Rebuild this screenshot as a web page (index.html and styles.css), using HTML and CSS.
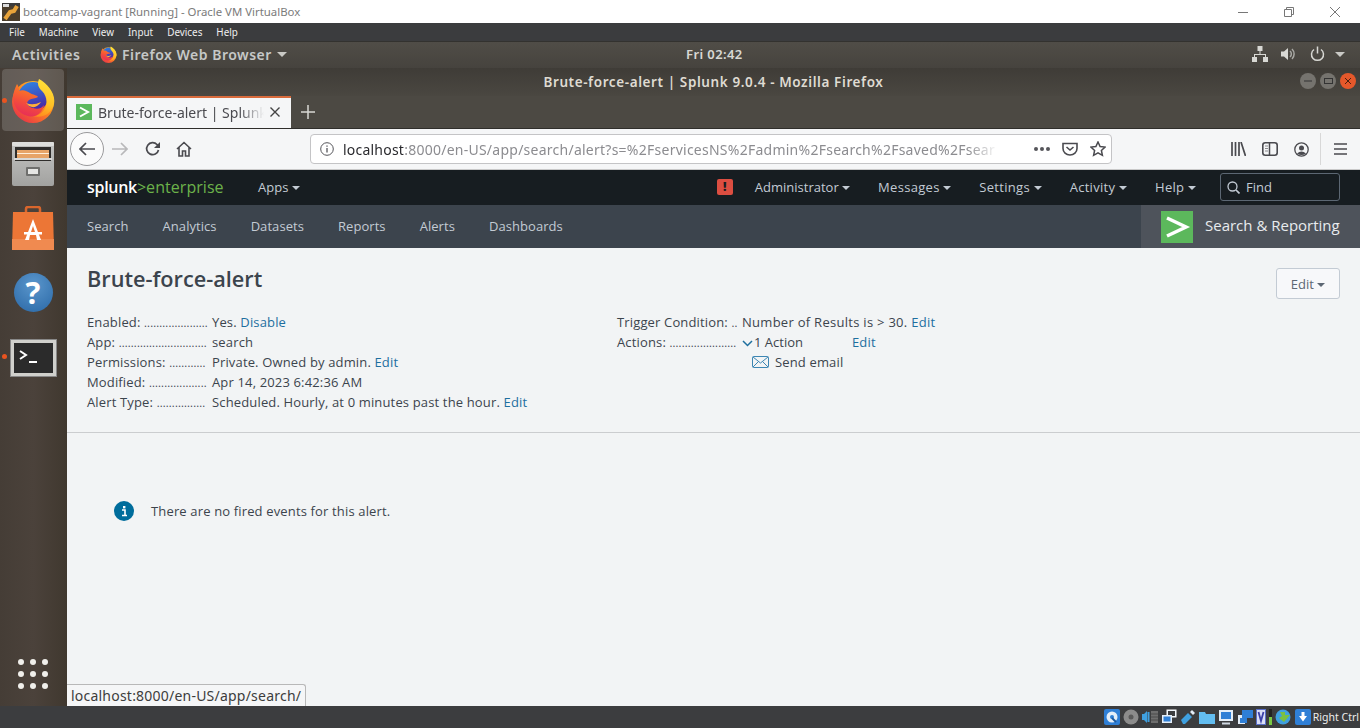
FILE: index.html
```html
<!DOCTYPE html>
<html lang="en">
<head>
    <meta charset="UTF-8">
    <title>Brute-force-alert | Splunk 9.0.4</title>
    <link rel="stylesheet" href="styles.css">
</head>
<body>
    <div class="vm-title">
        <svg class="vm-logo" width="18" height="18" viewBox="0 0 18 18"><rect width="18" height="18" fill="#3b3a3a"/><rect y="3" width="18" height="15" fill="#4a3d2c"/><path d="M3 16 L8 9 L12 8 L15 3" stroke="#e8a33a" stroke-width="4" fill="none"/><rect x="1" y="1" width="6" height="3" fill="#ddd"/></svg>
        <span class="vm-title-text">bootcamp-vagrant [Running] - Oracle VM VirtualBox</span>
        <div class="vm-controls">
            <svg width="12" height="12" viewBox="0 0 12 12"><path d="M1 6.500H11" stroke="#777"/></svg>
            <svg width="12" height="12" viewBox="0 0 12 12"><path d="M1.500 3.500H8.500V10.500H1.500ZM3.500 3.500V1.500H10.500V8.500H8.500" stroke="#777" fill="none"/></svg>
            <svg width="12" height="12" viewBox="0 0 12 12"><path d="M1 1L11 11M11 1L1 11" stroke="#777"/></svg>
        </div>
    </div>
    <div class="vm-menu">
        <span>File</span><span>Machine</span><span>View</span><span>Input</span><span>Devices</span><span>Help</span>
    </div>

    <div class="topbar">
        <span class="activities">Activities</span>
        <span class="app-menu">
            <svg width="17" height="17" viewBox="0 0 44 45"><use href="#firefox"/></svg>
            Firefox Web Browser <i class="caret caret-grey"></i>
        </span>
        <span class="clock">Fri 02:42</span>
        <div class="tray">
            <svg width="16" height="16" viewBox="0 0 16 16" fill="#d8d8d4"><rect x="5.500" y="0" width="5" height="5"/><rect x="0" y="11" width="5" height="5"/><rect x="11" y="11" width="5" height="5"/><path d="M7.500 5h1v3h5.500v3h-1V9H3v2H2V8h5.500z"/></svg>
            <svg width="16" height="16" viewBox="0 0 16 16"><path d="M0 5.500h3L7 2v12L3 10.500H0z" fill="#d8d8d4"/><path d="M9 5a4 4 0 0 1 0 6M11 3a7 7 0 0 1 0 10" stroke="#a8a8a4" stroke-width="1.500" fill="none"/></svg>
            <svg class="power" width="15" height="16" viewBox="0 0 15 16"><path d="M4 3.500a6 6 0 1 0 7 0M7.500 0.500v7" stroke="#d8d8d4" stroke-width="1.500" fill="none"/></svg>
            <i class="caret caret-grey tray-caret"></i>
        </div>
    </div>

    <div class="desktop">
        <aside class="dock">
            <div class="dock-item active">
                <i class="run-dot"></i>
                <svg width="44" height="45" viewBox="0 0 44 45"><use href="#firefox"/></svg>
            </div>
            <div class="dock-item">
                <svg width="42" height="44" viewBox="0 0 42 44">
                    <defs><linearGradient id="cabinet" x1="0" y1="0" x2="0" y2="1"><stop offset="0" stop-color="#c4c4c2"/><stop offset="1" stop-color="#a2a2a0"/></linearGradient></defs>
                    <rect width="42" height="44" rx="2" fill="url(#cabinet)"/><rect width="42" height="4" rx="1" fill="#dededc"/><rect x="3" y="5" width="36" height="14" fill="#2f2d2b"/><rect x="5" y="8" width="32" height="8" fill="#e7a468"/><rect x="5" y="11" width="32" height="1" fill="#fff0dc"/><rect x="2" y="16" width="38" height="2" fill="#d9d9d7"/><rect x="14" y="25" width="14" height="9" rx="1" fill="#6f6f6d"/><rect x="16" y="27" width="10" height="5" fill="#e6e6e4"/>
                </svg>
            </div>
            <div class="dock-item">
                <svg width="42" height="44" viewBox="0 0 42 44"><path d="M14 9V3q0-2 2-2h10q2 0 2 2v6" stroke="#d9662c" stroke-width="2.500" fill="none"/><path d="M1 6h40l1 38H0z" fill="#ec7636"/><rect y="33" width="42" height="11" fill="#f08a50"/><path d="M21 13l8 21h-4l-1-5h-6l-1 5h-4zM21 20l-2 6h4z" fill="#fff"/><rect x="12" y="26" width="18" height="2.500" fill="#fff"/></svg>
            </div>
            <div class="dock-item">
                <div class="help-ball">?</div>
            </div>
            <div class="dock-item">
                <i class="run-dot"></i>
                <div class="terminal">
                    <svg width="20" height="14" viewBox="0 0 20 14"><path d="M1 1l6 4-6 4" stroke="#fff" stroke-width="2" fill="none"/><path d="M10 12h8" stroke="#fff" stroke-width="2"/></svg>
                </div>
            </div>
            <div class="app-grid">
                <i></i><i></i><i></i><i></i><i></i><i></i><i></i><i></i><i></i>
            </div>
        </aside>

        <div class="window">
            <div class="win-title">
                <span>Brute-force-alert | Splunk 9.0.4 - Mozilla Firefox</span>
                <div class="win-buttons">
                    <i class="win-btn"><svg width="8" height="8" viewBox="0 0 8 8"><path d="M0 4h8" stroke="#333"/></svg></i>
                    <i class="win-btn"><svg width="9" height="8" viewBox="0 0 9 8"><rect x=".5" y="1.500" width="8" height="5" stroke="#333" fill="none"/></svg></i>
                    <i class="win-btn close"><svg width="8" height="8" viewBox="0 0 8 8"><path d="M1 1l6 6M7 1l-6 6" stroke="#4a2010"/></svg></i>
                </div>
            </div>
            <div class="tabstrip">
                <div class="tab">
                    <svg class="favicon" width="16" height="16" viewBox="0 0 16 16"><rect width="16" height="16" fill="#5cb85c"/><path d="M4 3.500l8 4.500-8 4.500" stroke="#fff" stroke-width="2" fill="none"/></svg>
                    <span class="tab-label">Brute-force-alert | Splunk</span>
                    <svg width="10" height="10" viewBox="0 0 10 10"><path d="M.5 .5l9 9M9.500 .5l-9 9" stroke="#444" stroke-width="1.400"/></svg>
                </div>
                <svg class="new-tab" width="14" height="14" viewBox="0 0 14 14"><path d="M7 0v14M0 7h14" stroke="#d8d8d4" stroke-width="1.500"/></svg>
            </div>
            <div class="toolbar">
                <div class="back-btn">
                    <svg width="16" height="14" viewBox="0 0 16 14"><path d="M7 1L1 7l6 6M1 7h15" stroke="#4a4a4f" stroke-width="1.700" fill="none"/></svg>
                </div>
                <svg class="tool-icon" width="16" height="14" viewBox="0 0 16 14"><path d="M9 1l6 6-6 6M15 7H0" stroke="#b8b8ba" stroke-width="1.700" fill="none"/></svg>
                <svg class="tool-icon reload" width="16" height="16" viewBox="0 0 16 16"><path d="M13.500 9a6 6 0 1 1-1.500-5.500L14 6" stroke="#4a4a4f" stroke-width="1.700" fill="none"/><path d="M15 1v6H9z" fill="#4a4a4f"/></svg>
                <svg class="tool-icon home" width="16" height="16" viewBox="0 0 16 16"><path d="M1 8l7-6.500L15 8M3 6.500V15h3.500v-5h3v5H13V6.500" stroke="#4a4a4f" stroke-width="1.600" fill="none"/></svg>
                <div class="urlbar">
                    <svg width="14" height="14" viewBox="0 0 14 14"><circle cx="7" cy="7" r="6.300" stroke="#55555a" fill="none"/><path d="M7 6v4.500M7 3.500v1.300" stroke="#55555a" stroke-width="1.300"/></svg>
                    <span class="url"><b>localhost</b>:8000/en-US/app/search/alert?s=%2FservicesNS%2Fadmin%2Fsearch%2Fsaved%2Fsear</span>
                    <span class="url-dots"><i></i><i></i><i></i></span>
                    <svg width="16" height="14" viewBox="0 0 16 14"><path d="M1 1.500h14v5a7 6.500 0 0 1-14 0z" stroke="#4a4a4f" stroke-width="1.600" fill="none"/><path d="M4.500 5l3.500 3 3.500-3" stroke="#4a4a4f" stroke-width="1.600" fill="none"/></svg>
                    <svg width="16" height="16" viewBox="0 0 16 16"><path d="M8 1l2.100 4.600 5 .5-3.700 3.300 1 4.900L8 11.900l-4.400 2.400 1-4.900L.9 6.100l5-.5z" stroke="#4a4a4f" stroke-width="1.500" fill="none"/></svg>
                </div>
                <div class="tool-right">
                    <svg width="15" height="14" viewBox="0 0 15 14"><path d="M1 0v14M4.500 0v14M8 0v14M10 0l4.500 14" stroke="#4a4a4f" stroke-width="1.700" fill="none"/></svg>
                    <svg width="16" height="14" viewBox="0 0 16 14"><rect x=".8" y=".8" width="14.400" height="12.400" rx="2.500" stroke="#4a4a4f" stroke-width="1.600" fill="none"/><path d="M7.500 1v12" stroke="#4a4a4f" stroke-width="1.500"/><path d="M3 4h3M3 6.500h3M3 9h3" stroke="#8a8a8e"/></svg>
                    <svg width="15" height="15" viewBox="0 0 15 15"><circle cx="7.500" cy="7.500" r="6.700" stroke="#4a4a4f" stroke-width="1.300" fill="none"/><circle cx="7.500" cy="6" r="2.500" fill="#4a4a4f"/><path d="M3 11.500q4.500-4 9 0q-4.500 3-9 0z" fill="#4a4a4f"/></svg>
                    <i class="tool-sep"></i>
                    <svg width="13" height="12" viewBox="0 0 13 12"><path d="M0 1h13M0 6h13M0 11h13" stroke="#4a4a4f" stroke-width="1.700"/></svg>
                </div>
            </div>

            <div class="splunk">
                <header class="splunk-bar">
                    <span class="splunk-logo">splunk<em>&gt;enterprise</em></span>
                    <span class="bar-link apps">Apps <i class="caret"></i></span>
                    <div class="bar-right">
                        <span class="alert-badge">!</span>
                        <span class="bar-link user-link">Administrator <i class="caret"></i></span>
                        <span class="bar-link">Messages <i class="caret"></i></span>
                        <span class="bar-link">Settings <i class="caret"></i></span>
                        <span class="bar-link">Activity <i class="caret"></i></span>
                        <span class="bar-link">Help <i class="caret"></i></span>
                        <div class="find">
                            <svg width="13" height="13" viewBox="0 0 13 13"><circle cx="5.500" cy="5.500" r="4.500" stroke="#c3cbd4" stroke-width="1.300" fill="none"/><path d="M9 9l3.500 3.500" stroke="#c3cbd4" stroke-width="1.700"/></svg>
                            Find
                        </div>
                    </div>
                </header>
                <nav class="app-nav">
                    <a>Search</a><a>Analytics</a><a>Datasets</a><a>Reports</a><a>Alerts</a><a>Dashboards</a>
                    <div class="app-name">
                        <svg width="32" height="32" viewBox="0 0 32 32"><rect width="32" height="32" fill="#5cb85c"/><path d="M6 7l19 9-19 9" stroke="#fff" stroke-width="3.500" fill="none"/></svg>
                        <span>Search &amp; Reporting</span>
                    </div>
                </nav>

                <main class="content">
                    <section class="alert-head">
                        <div class="head-row">
                            <h1>Brute-force-alert</h1>
                            <button class="edit-btn">Edit <i class="caret caret-dark"></i></button>
                        </div>
                        <div class="details">
                            <div class="detail-col col-left">
                                <div class="row"><span class="key">Enabled: <span class="dots">.....................</span></span><span>Yes. <a>Disable</a></span></div>
                                <div class="row"><span class="key">App: <span class="dots">.............................</span></span><span>search</span></div>
                                <div class="row"><span class="key">Permissions: <span class="dots">............</span></span><span>Private. Owned by admin. <a>Edit</a></span></div>
                                <div class="row"><span class="key">Modified: <span class="dots">...................</span></span><span>Apr 14, 2023 6:42:36 AM</span></div>
                                <div class="row"><span class="key">Alert Type: <span class="dots">................</span></span><span>Scheduled. Hourly, at 0 minutes past the hour. <a>Edit</a></span></div>
                            </div>
                            <div class="detail-col">
                                <div class="row"><span class="key">Trigger Condition: <span class="dots">..</span></span><span class="trigger-value">Number of Results is &gt; 30. <a>Edit</a></span></div>
                                <div class="row"><span class="key">Actions: <span class="dots">......................</span></span><span class="action-count"><svg width="11" height="7" viewBox="0 0 11 7"><path d="M1 1l4.500 4.500L10 1" stroke="#1e6f9f" stroke-width="1.500" fill="none"/></svg>1 Action</span><a>Edit</a></div>
                                <div class="row row-email">
                                    <svg width="17" height="12" viewBox="0 0 17 12"><rect x=".5" y=".5" width="16" height="11" rx="1" stroke="#3d86b3" fill="none"/><path d="M1 1l7.500 6L16 1M1 11l5.500-5.500M16 11l-5.500-5.500" stroke="#3d86b3" fill="none"/></svg>
                                    <span>Send email</span>
                                </div>
                            </div>
                        </div>
                    </section>
                    <div class="no-events">
                        <svg width="20" height="20" viewBox="0 0 20 20"><circle cx="10" cy="10" r="10" fill="#006d9c"/><path d="M8 9h3v5.500M8 14.500h5" stroke="#fff" stroke-width="1.600" fill="none"/><rect x="9" y="5" width="2.400" height="2.400" fill="#fff"/></svg>
                        <span>There are no fired events for this alert.</span>
                    </div>
                </main>
            </div>
            <div class="status-tip">localhost:8000/en-US/app/search/</div>
        </div>
    </div>

    <footer class="vm-status">
        <svg viewBox="0 0 16 16"><rect width="16" height="16" rx="2" fill="#2f7fd6"/><circle cx="8" cy="8" r="5.500" fill="#e4eef8"/><circle cx="8" cy="8" r="2" fill="#2f7fd6"/><path d="M8 9l4 4" stroke="#1c5a9e" stroke-width="2"/></svg>
        <svg viewBox="0 0 16 16"><circle cx="8" cy="8" r="7.500" fill="#8c8c8c"/><circle cx="8" cy="8" r="2.500" fill="#5a5a5a"/></svg>
        <svg viewBox="0 0 16 16"><path d="M0 5h2l3-3v12l-3-3H0z" fill="#3fa0e0"/><path d="M6.500 3v10" stroke="#3fa0e0" stroke-width="2"/><rect x="9" y="2" width="7" height="12" fill="#6e6e6e"/><path d="M9 5h7M9 8h7M9 11h7" stroke="#4a4a4a"/></svg>
        <svg viewBox="0 0 16 16"><rect x="6" y="1" width="9" height="7" fill="#e4eef8" stroke="#fff"/><rect x="7" y="2" width="7" height="5" fill="#3c3d3f"/><rect x="1" y="6" width="10" height="8" fill="#e4eef8"/><rect x="2.500" y="7.500" width="7" height="5" fill="#2f7fd6"/></svg>
        <svg viewBox="0 0 16 16"><path d="M1 11l7-7 4 4-7 7H3z" fill="#3fa0e0"/><path d="M10 3l2-2 3 3-2 2z" fill="#e4eef8"/></svg>
        <svg viewBox="0 0 16 16"><path d="M0 3h6l1 2h9v10H0z" fill="#63bdf0"/></svg>
        <svg viewBox="0 0 16 16"><rect x="1" y="1" width="14" height="11" fill="#e4eef8"/><rect x="3" y="3" width="10" height="7" fill="#2f7fd6"/><path d="M4 14.500h8" stroke="#cfd8e2" stroke-width="2"/></svg>
        <svg viewBox="0 0 16 16"><path d="M1 6h7v9H1z" fill="#e4eef8"/><rect x="5" y="1" width="11" height="8" fill="#2f7fd6"/><rect x="3" y="9" width="7" height="5" fill="#2f7fd6"/></svg>
        <svg class="vm-v" viewBox="0 0 10 16"><rect width="10" height="16" fill="#5a6fc8"/><rect x="1" y="1" width="8" height="14" fill="#d9def5"/><path d="M2.500 3l2.500 9 2.500-9" stroke="#3a3fa8" stroke-width="1.800" fill="none"/></svg>
        <i class="vm-meter"></i>
        <svg class="vm-net" viewBox="0 0 17 16"><circle cx="8" cy="8" r="7.500" fill="#3fa0e0"/><path d="M5 3h5v3h5l-6 7-5-4 3-2z" fill="#7ac043"/></svg>
        <svg viewBox="0 0 16 16"><rect width="16" height="16" rx="2" fill="#2f7fd6"/><path d="M6.500 3h3v4H12l-4 5.500L4 7h2.500z" fill="#fff"/></svg>
        <span>Right Ctrl</span>
    </footer>

    <svg class="sprites" width="0" height="0">
        <defs>
            <linearGradient id="ffBase" x1="1" y1="0" x2="0.2" y2="1">
                <stop offset="0" stop-color="#ffd52e"/>
                <stop offset=".5" stop-color="#ff8a1e"/>
                <stop offset="1" stop-color="#e8304a"/>
            </linearGradient>
            <linearGradient id="ffBlue" x1="0" y1="0" x2="0.3" y2="1">
                <stop offset="0" stop-color="#2a8ae8"/>
                <stop offset="1" stop-color="#4b2aa5"/>
            </linearGradient>
            <linearGradient id="ffFlame" x1="0.5" y1="0" x2="0.3" y2="1">
                <stop offset="0" stop-color="#ffe23a"/>
                <stop offset=".6" stop-color="#ffc226"/>
                <stop offset="1" stop-color="#ff8a1e"/>
            </linearGradient>
            <linearGradient id="ffFox" x1="0.6" y1="0" x2="0.3" y2="1">
                <stop offset="0" stop-color="#ff8a1e"/>
                <stop offset=".55" stop-color="#f4503a"/>
                <stop offset="1" stop-color="#e62a5a"/>
            </linearGradient>
            <g id="firefox">
                <circle cx="22" cy="24" r="21" fill="url(#ffBase)"/>
                <circle cx="22" cy="19" r="15" fill="url(#ffBlue)"/>
                <path d="M28 1C26 6 27 9 31 13C36 18 37 26 33 32C30 36 26 38 22 38C32 41 41 35 43 26C45 16 37 6 28 1Z" fill="url(#ffFlame)"/>
                <path d="M6 6C8 9 8 11 8 13C12 11 16 13 19 15C22 17 26 17 27 19C24 21 21 20 18 22C14 25 17 29 22 30C27 32 31 30 33 27C31 36 24 40 17 38C8 36 2 28 2 20C2 15 4 10 6 6Z" fill="url(#ffFox)"/>
                <path d="M15 25q7 3 15-1-4 6-9 5-4-1-6-4z" fill="#ffb03a"/>
            </g>
        </defs>
    </svg>
</body>
</html>
```

FILE: styles.css
```css
* {
    margin: 0;
    padding: 0;
    box-sizing: border-box;
}

html, body {
    height: 728px;
    overflow: hidden;
}

body {
    display: flex;
    flex-direction: column;
    font-family: 'Noto Sans', sans-serif;
    background: #3c3d3f;
}

i {
    display: block;
    font-style: normal;
}

.caret {
    display: inline-block;
    width: 0;
    height: 0;
    border-left: 4px solid transparent;
    border-right: 4px solid transparent;
    border-top: 4px solid #c3cbd4;
    vertical-align: 2px;
}

.caret-grey {
    border-left-width: 5px;
    border-right-width: 5px;
    border-top: 5px solid #c9c9c5;
}

.caret-dark {
    border-top-color: #5c6773;
}

/* VirtualBox host window */
.vm-title {
    height: 23px;
    background: #fff;
    display: flex;
    align-items: center;
    padding-left: 2px;
    font-size: 11.400px;
    color: #7b7b7b;
    flex: none;
}

.vm-title-text {
    margin-left: 3px;
}

.vm-controls {
    margin-left: auto;
    display: flex;
    gap: 34px;
    padding-right: 19px;
}

.vm-menu {
    height: 18px;
    flex: none;
    display: flex;
    align-items: center;
    background: #3b3c3e;
    color: #eee;
    font-size: 9.900px;
    padding-left: 9px;
    gap: 14px;
}

.topbar {
    height: 27px;
    flex: none;
    display: flex;
    align-items: center;
    position: relative;
    background: linear-gradient(#504d47, #46433e);
    border-top: 1px solid #33322f;
    color: #d8d8d4;
    font-size: 14px;
    font-weight: 600;
    padding: 0 0 2px 12px;
}

.activities {
    width: 88px;
    letter-spacing: .6px;
    color: #c6c8c8;
}

.app-menu {
    display: flex;
    align-items: center;
    gap: 5px;
    letter-spacing: .5px;
    color: #c6c8c8;
}

.clock {
    position: absolute;
    left: 686px;
    font-size: 13px;
    letter-spacing: .4px;
}

.tray {
    margin-left: auto;
    display: flex;
    align-items: center;
    gap: 13px;
    padding-right: 15px;
}

.tray-caret {
    margin-left: -3px;
}

.desktop {
    flex: 1;
    display: flex;
    min-height: 0;
}

.dock {
    width: 67px;
    flex: none;
    background: linear-gradient(90deg, #453d36, #4b423b 50%, #40382f);
    display: flex;
    flex-direction: column;
    position: relative;
    padding: 1px 0 0 2px;
}

.dock-item {
    width: 62px;
    height: 62px;
    margin-bottom: 2px;
    display: flex;
    align-items: center;
    justify-content: center;
    position: relative;
    border-radius: 4px;
}

.dock-item.active {
    background: rgba(255, 255, 255, .16);
}

.run-dot {
    position: absolute;
    left: 0;
    top: 29px;
    width: 5px;
    height: 5px;
    border-radius: 50%;
    background: #e95420;
}

.help-ball {
    width: 39px;
    height: 39px;
    border-radius: 50%;
    background: radial-gradient(circle at 50% 30%, #5a96cc, #2a68a6);
    color: #fff;
    font-size: 31px;
    font-weight: 700;
    line-height: 39px;
    text-align: center;
}

.terminal {
    width: 45px;
    height: 36px;
    margin-top: 4px;
    background: #2b2b2b;
    border: 3px solid #d0d0cc;
    outline: 1px solid #888;
    padding: 4px 0 0 5px;
}

.app-grid {
    position: absolute;
    left: 18px;
    bottom: 17px;
    display: grid;
    grid-template-columns: repeat(3, 6px);
    gap: 6px;
}

.app-grid i {
    width: 6px;
    height: 6px;
    border-radius: 50%;
    background: #f0efeb;
}

.window {
    flex: 1;
    display: flex;
    flex-direction: column;
    position: relative;
    min-width: 0;
}

.win-title {
    height: 28px;
    flex: none;
    display: flex;
    align-items: center;
    justify-content: center;
    background: linear-gradient(#3f3c37, #4a4741);
    color: #dfdbd2;
    font-size: 13.500px;
    font-weight: 600;
    letter-spacing: .6px;
    position: relative;
}

.win-buttons {
    position: absolute;
    right: 4px;
    top: 5px;
    display: flex;
    gap: 4px;
}

.win-btn {
    width: 16px;
    height: 16px;
    border-radius: 50%;
    background: #75736e;
    display: flex;
    align-items: center;
    justify-content: center;
}

.win-btn.close {
    background: #e5582b;
}

.tabstrip {
    height: 33px;
    flex: none;
    display: flex;
    align-items: center;
    background: #4c4943;
    border-bottom: 1px solid #2f2e2b;
}

.tab {
    width: 224px;
    height: 32px;
    background: #f5f6f7;
    border-top: 2px solid #d96b3c;
    display: flex;
    align-items: center;
    padding: 0 11px 2px 9px;
    color: #4a4a4f;
    font-size: 14px;
}

.favicon {
    flex: none;
    margin-right: 6px;
}

.tab-label {
    flex: 1;
    white-space: nowrap;
    overflow: hidden;
    margin-right: 6px;
    -webkit-mask-image: linear-gradient(90deg, #000 85%, transparent);
    mask-image: linear-gradient(90deg, #000 85%, transparent);
}

.new-tab {
    margin-left: 10px;
}

.toolbar {
    height: 41px;
    flex: none;
    display: flex;
    align-items: center;
    background: #f5f6f7;
    border-bottom: 1px solid #c9c9c9;
    padding-left: 3px;
}

.back-btn {
    width: 34px;
    height: 34px;
    border-radius: 50%;
    border: 1px solid #9a9a9c;
    background: #fbfbfb;
    display: flex;
    align-items: center;
    justify-content: center;
    margin-right: 8px;
}

.reload {
    margin-left: 17px;
}

.home {
    margin-left: 15px;
}

.urlbar {
    width: 802px;
    height: 30px;
    margin-left: 118px;
    background: #fff;
    border: 1px solid #c4c4c6;
    border-radius: 4px;
    display: flex;
    align-items: center;
    padding: 0 5px 0 9px;
    gap: 12px;
    font-size: 14px;
    color: #8c8c90;
}

.url {
    flex: 1;
    min-width: 0;
    margin-left: -3px;
    overflow: hidden;
    white-space: nowrap;
    letter-spacing: .25px;
    -webkit-mask-image: linear-gradient(90deg, #000 92%, transparent 96.500%);
    mask-image: linear-gradient(90deg, #000 92%, transparent 96.500%);
}

.url b {
    font-weight: 400;
    letter-spacing: .22px;
    color: #2a2a2e;
}

.url-dots {
    display: flex;
    gap: 2px;
}

.url-dots i {
    width: 4px;
    height: 4px;
    border-radius: 50%;
    background: #55555a;
}

.tool-right {
    display: flex;
    align-items: center;
    gap: 16px;
    margin-left: 119px;
}

.tool-sep {
    width: 1px;
    height: 32px;
    background: #d8d8d8;
    margin: 0 -3px 0 -5px;
}

/* Splunk page */
.splunk {
    flex: 1;
    display: flex;
    flex-direction: column;
    background: #f2f4f5;
    font-family: 'Open Sans', sans-serif;
    min-height: 0;
}

.splunk-bar {
    height: 35px;
    flex: none;
    display: flex;
    align-items: center;
    background: #171d21;
    padding: 0 0 1px 20px;
    color: #c3cbd4;
    font-size: 13px;
}

.splunk-logo {
    font-size: 16px;
    font-weight: 600;
    color: #fff;
    width: 171px;
    letter-spacing: -.3px;
}

.splunk-logo em {
    font-style: normal;
    font-weight: 400;
    color: #6cb24a;
    letter-spacing: .05px;
}

.bar-right {
    margin-left: auto;
    display: flex;
    align-items: center;
    gap: 28px;
    padding-right: 20px;
}

.bar-right .bar-link {
    letter-spacing: .3px;
}

.bar-right .user-link {
    letter-spacing: 0;
}

.alert-badge {
    width: 16px;
    height: 16px;
    border-radius: 2px;
    background: #dc4e41;
    color: #171d21;
    font-size: 12px;
    font-weight: 800;
    line-height: 16px;
    text-align: center;
    margin-right: -6px;
}

.find {
    width: 120px;
    height: 28px;
    border: 1px solid #5c6773;
    border-radius: 3px;
    display: flex;
    align-items: center;
    gap: 6px;
    padding-left: 6px;
    margin-left: -4px;
}

.app-nav {
    height: 43px;
    flex: none;
    display: flex;
    align-items: center;
    background: #3c444d;
    padding-left: 20px;
    gap: 34px;
    color: #c3cbd4;
    font-size: 13px;
    letter-spacing: .06px;
}

.app-nav a {
    margin-bottom: 1px;
}

.app-name {
    margin-left: auto;
    width: 219px;
    height: 43px;
    background: #4e535b;
    display: flex;
    align-items: center;
    gap: 12px;
    padding-left: 20px;
    font-size: 15px;
    letter-spacing: 0;
    color: #e8ebee;
    white-space: nowrap;
}

.app-name span {
    margin-bottom: 3px;
}

.content {
    flex: 1;
    color: #3c444d;
    font-size: 13px;
    letter-spacing: .15px;
}

.alert-head {
    height: 185px;
    border-bottom: 1px solid #cbcdcf;
    padding: 16px 20px 0;
}

.head-row {
    display: flex;
    align-items: flex-start;
    justify-content: space-between;
    height: 48px;
}

h1 {
    font-size: 21.700px;
    font-weight: 600;
    letter-spacing: 0;
    line-height: 30px;
}

.edit-btn {
    width: 64px;
    height: 31px;
    margin-top: 4px;
    border: 1px solid #c3cbd4;
    border-radius: 3px;
    background: #f7f8fa;
    color: #5c6773;
    font: inherit;
    letter-spacing: 0;
}

.details {
    display: flex;
}

.detail-col {
    display: flex;
    flex-direction: column;
}

.col-left {
    width: 530px;
}

.row {
    display: flex;
    height: 20px;
    line-height: 20px;
    white-space: nowrap;
}

.key {
    width: 125px;
    flex: none;
}

.dots {
    font-size: 11px;
    letter-spacing: .15px;
}

.trigger-value {
    letter-spacing: .28px;
}

.row a {
    color: #1e6f9f;
}

.action-count {
    width: 110px;
    letter-spacing: 0;
}

.action-count svg {
    margin-right: 1px;
}

.row-email {
    align-items: center;
    padding-left: 135px;
    gap: 6px;
}

.no-events {
    display: flex;
    align-items: center;
    gap: 17px;
    margin: 68px 0 0 47px;
}

.status-tip {
    position: absolute;
    left: 0;
    bottom: 0;
    height: 22px;
    padding: 0 4px;
    background: #f5f6f7;
    border: 1px solid #b8b8b8;
    border-left: none;
    border-bottom: none;
    border-radius: 0 3px 0 0;
    color: #3c3c3c;
    font-size: 14px;
    letter-spacing: .22px;
    line-height: 21px;
}

.vm-status {
    height: 22px;
    flex: none;
    display: flex;
    align-items: center;
    justify-content: flex-end;
    background: #3c3d3f;
    color: #eee;
    font-size: 10.500px;
    gap: 3px;
    padding-right: 1px;
}

.vm-status svg {
    width: 16px;
    height: 16px;
}

.vm-status svg.vm-v {
    width: 10px;
}

.vm-status svg.vm-net {
    width: 17px;
}

.vm-status span {
    margin-left: -1px;
    white-space: nowrap;
}

.vm-meter {
    width: 3px;
    height: 16px;
    background: linear-gradient(#222 50%, #7ac943 50%);
}

.sprites {
    position: absolute;
}
```
